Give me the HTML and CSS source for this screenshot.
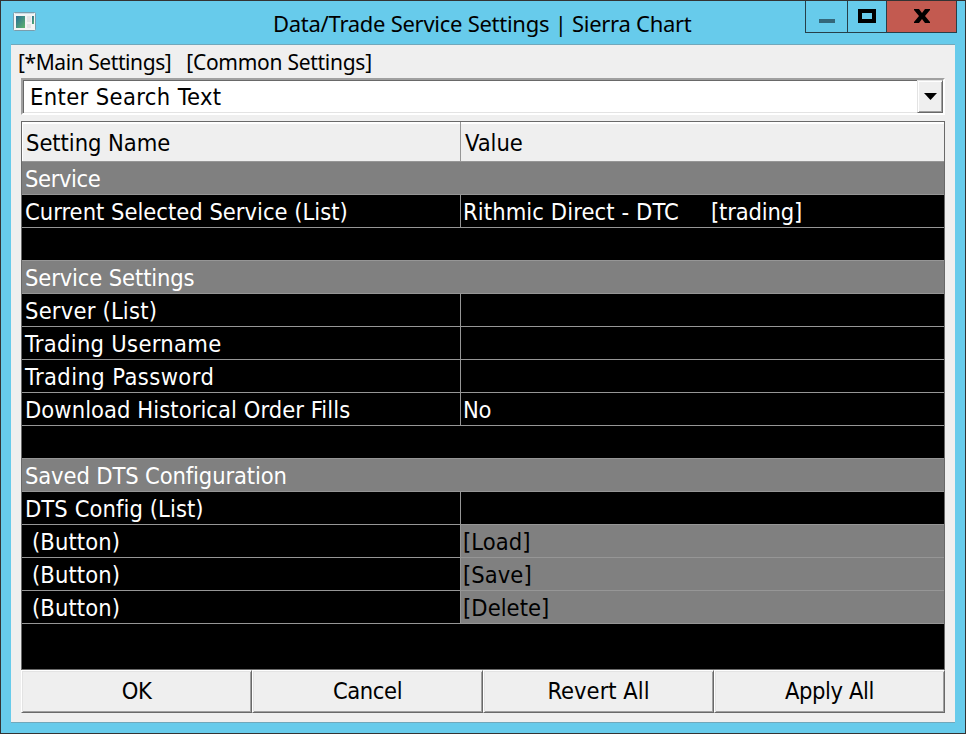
FILE: index.html
```html
<!DOCTYPE html>
<html lang="en">
<head>
<meta charset="utf-8">
<title>Data/Trade Service Settings | Sierra Chart</title>
<link rel="stylesheet" href="styles.css">
</head>
<body>
<div class="window">
  <header class="titlebar">
    <svg class="app-icon" width="24" height="20" viewBox="0 0 24 20">
      <defs><linearGradient id="pane" x1="0" y1="0" x2="1" y2="1"><stop offset="0" stop-color="#276c96"/><stop offset="1" stop-color="#60b56c"/></linearGradient></defs>
      <rect x=".5" y=".5" width="22" height="18" rx="1" fill="#f4f4f4" stroke="#7b9dac"/>
      <path d="M2 1.5h19" stroke="#c9dce6"/>
      <rect x="3" y="4" width="9" height="12" fill="url(#pane)"/>
      <path d="M14 4h4v6h-4zM14 12h4v4h-4z" fill="#e4e4e6"/>
      <rect x="19" y="4" width="2" height="8" fill="url(#pane)"/>
    </svg>
    <h1 class="title"><span>Data/Trade Service Settings | Sierra Chart</span></h1>
    <div class="controls">
      <div class="control min"><svg width="16" height="4"><path d="M0 0h16v4H0z" fill="#34677a"/></svg></div>
      <div class="control max"><svg width="18" height="14"><path d="M2 2h14v10H2z" fill="none" stroke="#000" stroke-width="4"/></svg></div>
      <div class="control close"><svg width="16" height="14" viewBox="0 0 16 14"><path d="M0 0h5l3 4 3-4h5v1l-5 6 5 6v1h-5l-3-4-3 4H0v-1l5-6-5-6z"/></svg></div>
    </div>
  </header>
  <main class="client">
    <nav class="menu"><span class="menu-main">[*Main Settings]</span><span class="menu-common">[Common Settings]</span></nav>
    <div class="combo">
      <span class="search">Enter Search Text</span>
      <div class="drop"><svg width="13" height="7"><path d="M0 0h13L6.5 7z"/></svg></div>
    </div>
    <section class="table">
      <div class="row head"><div class="name"><span class="t-name">Setting Name</span></div><div class="value"><span class="t-value">Value</span></div></div>
      <div class="row group"><span class="t-service">Service</span></div>
      <div class="row"><div class="name"><span class="t-current">Current Selected Service (List)</span></div><div class="value"><span class="t-rithmic">Rithmic Direct - DTC</span><span class="t-trading">[trading]</span></div></div>
      <div class="row"></div>
      <div class="row group"><span class="t-settings">Service Settings</span></div>
      <div class="row"><div class="name"><span class="t-server">Server (List)</span></div><div class="value"></div></div>
      <div class="row"><div class="name"><span class="t-user">Trading Username</span></div><div class="value"></div></div>
      <div class="row"><div class="name"><span class="t-pass">Trading Password</span></div><div class="value"></div></div>
      <div class="row"><div class="name"><span class="t-download">Download Historical Order Fills</span></div><div class="value"><span class="t-no">No</span></div></div>
      <div class="row"></div>
      <div class="row group"><span class="t-saved">Saved DTS Configuration</span></div>
      <div class="row"><div class="name"><span class="t-config">DTS Config (List)</span></div><div class="value"></div></div>
      <div class="row"><div class="name indent"><span class="t-button">(Button)</span></div><div class="value action"><span class="t-load">[Load]</span></div></div>
      <div class="row"><div class="name indent"><span class="t-button">(Button)</span></div><div class="value action"><span class="t-save">[Save]</span></div></div>
      <div class="row"><div class="name indent"><span class="t-button">(Button)</span></div><div class="value action"><span class="t-delete">[Delete]</span></div></div>
    </section>
    <footer class="buttons">
      <div class="button"><span>OK</span></div>
      <div class="button"><span>Cancel</span></div>
      <div class="button"><span class="t-revert">Revert All</span></div>
      <div class="button"><span>Apply All</span></div>
    </footer>
  </main>
</div>
</body>
</html>
```
FILE: styles.css
```css
* { box-sizing: border-box; }
body { margin: 0; font: 23.5px/34px "DejaVu Sans Condensed", "DejaVu Sans", sans-serif; font-stretch: condensed; letter-spacing: -0.4px; color: #000; }
span { white-space: pre; }
svg { display: block; }
.window { width: 966px; height: 734px; border: 1px solid #333; background: #67cbeb; padding: 0 10px 10px; display: flex; flex-direction: column; }
.titlebar { height: 43px; flex: none; display: flex; align-items: flex-start; margin-right: -2px; }
.app-icon { margin: 11px 0 0 2px; }
.title { flex: 1; margin: 0 0 0 236px; padding-top: 6px; font: 22px/32px "Noto Sans", sans-serif; letter-spacing: -0.27px; }
.controls { display: flex; width: 152px; height: 32px; flex: none; border: 1px solid #263f49; border-top: 0; }
.control { height: 31px; display: flex; justify-content: center; }
.min { width: 42px; padding-top: 18px; border-right: 1px solid #263f49; }
.max { width: 39px; padding-top: 8px; border-right: 1px solid #263f49; }
.close { flex: 1; padding-top: 8px; background: #c35a50; }
.client { flex: 1; background: #efefef; border-top: 1px solid #71a8bb; border-bottom: 1px solid #71a8bb; padding: 0 10px; }
.menu { height: 33px; margin-left: -3px; display: flex; gap: 15px; font: 21px/34px "Noto Sans", sans-serif; }
.menu-main { letter-spacing: -0.42px; }
.menu-common { letter-spacing: -0.27px; }
.combo { height: 37px; width: 924px; background: #fff; border: 2px solid; border-color: #a0a0a0 #fff #fff #a0a0a0; box-shadow: inset 1px 1px #696969, inset -1px -1px #e3e3e3; padding: 0 0 0 7px; display: flex; justify-content: space-between; }
.search { line-height: 35px; letter-spacing: 0.38px; }
.drop { width: 26px; height: 33px; background: #efefef; border: 1px solid; border-color: #e3e3e3 #696969 #696969 #e3e3e3; box-shadow: inset 1px 1px #fff, inset -1px -1px #a0a0a0; display: flex; align-items: center; justify-content: center; }
.table { margin-top: 6px; height: 549px; width: 924px; background: #000; color: #fff; border: 1px solid #696969; }
.row { height: 33px; border-bottom: 1px solid #969696; display: flex; }
.name { width: 439px; border-right: 1px solid #969696; padding-left: 3px; }
.value { flex: 1; padding-left: 2px; display: flex; }
.head { height: 40px; line-height: 43px; color: #000; background: #efefef; box-shadow: inset 1px 2px #fff; }
.head .name, .head .value { padding-left: 4px; }
.group { background: #808080; padding-left: 3px; }
.indent { padding-left: 10px; }
.action { background: #808080; color: #000; }

/* Tracking follows the native dialog font's text widths. */
.t-name { letter-spacing: -0.05px; }
.t-value { letter-spacing: 0; }
.t-current { letter-spacing: 0; }
.t-rithmic { letter-spacing: 0.1px; }
.t-trading { margin-left: 32px; letter-spacing: -0.15px; }
.t-settings { letter-spacing: -0.13px; }
.t-server { letter-spacing: 0.2px; }
.t-user { letter-spacing: 0.3px; }
.t-pass { letter-spacing: 0.42px; }
.t-download { letter-spacing: 0.06px; }
.t-saved { letter-spacing: -0.13px; }
.t-config { letter-spacing: 0.08px; }
.t-button { letter-spacing: 0.1px; }
.t-load, .t-save, .t-delete { letter-spacing: 0.05px; }
.t-revert { letter-spacing: 0; }
.buttons { display: grid; grid-template-columns: repeat(4, 231px); height: 43px; }
.button { border: 1px solid; border-color: #fff #696969 #696969 #fff; box-shadow: inset 1px 1px #e3e3e3, inset -1px -1px #a0a0a0; text-align: center; line-height: 41px; }
```
